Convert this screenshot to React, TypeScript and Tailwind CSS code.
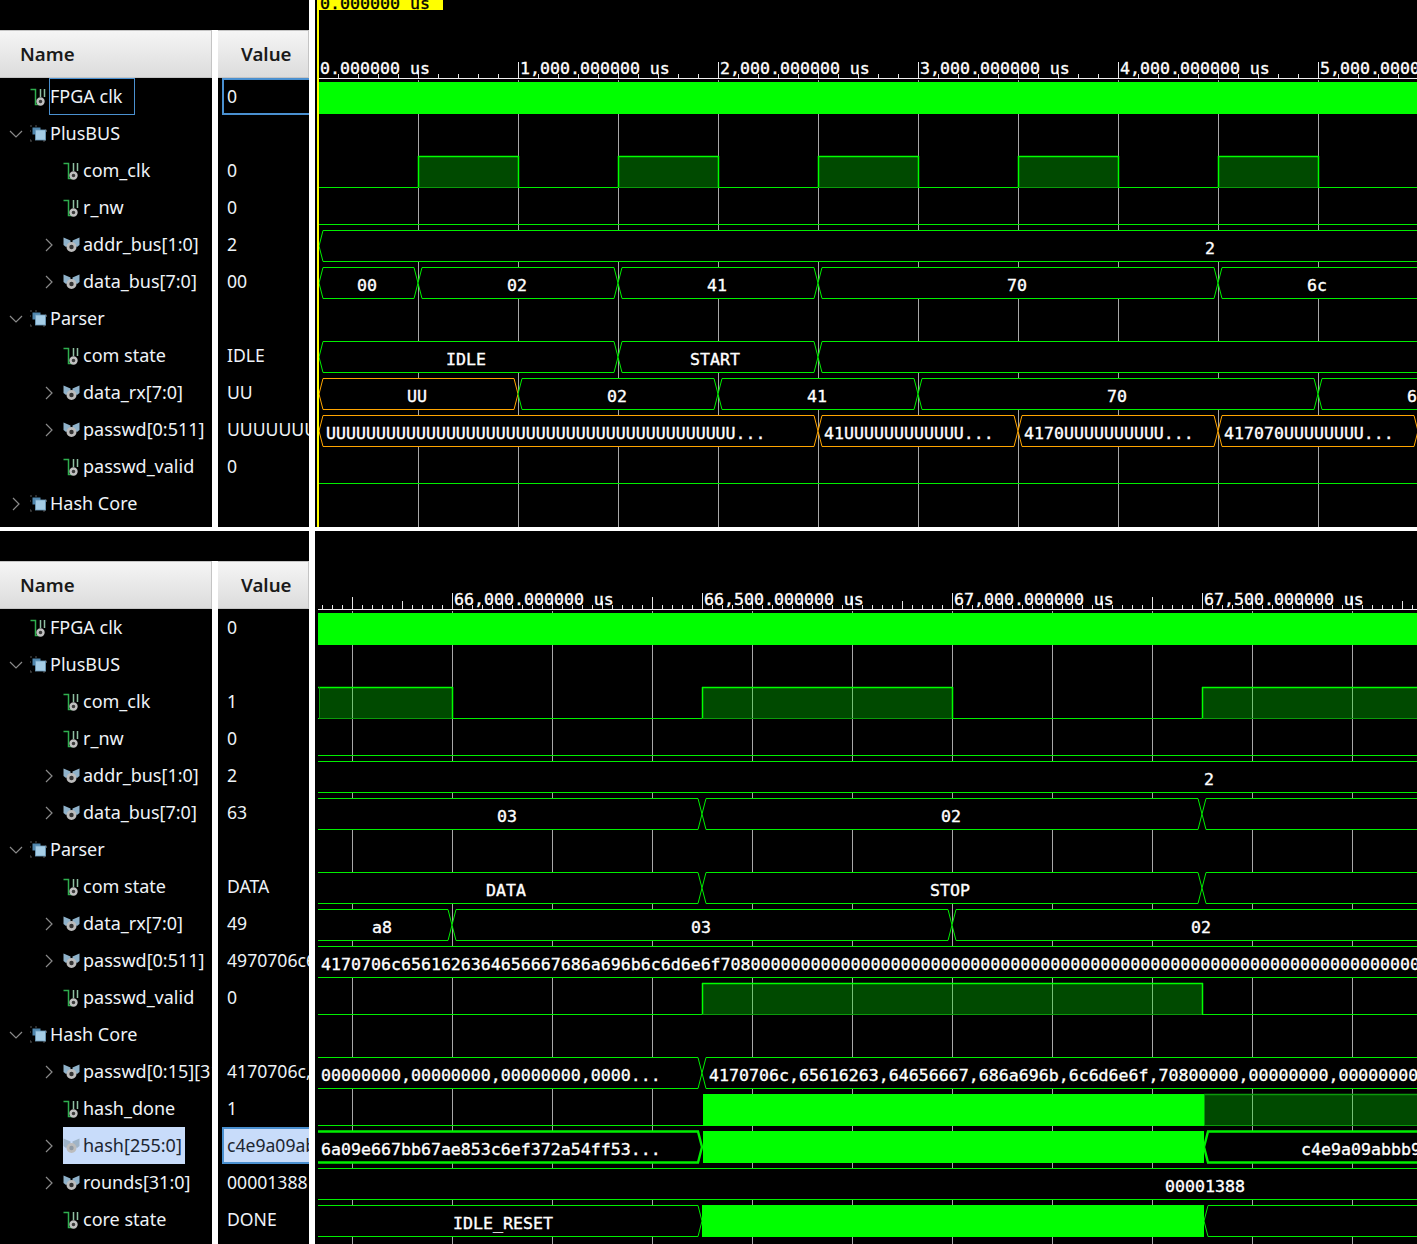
const ROW_H = 37;
const THIN = "#00ee00";
const BRIGHT = "#00ff00";
const ORANGE = "#ffa500";
const DIM = "#0b9a0b";
const WAVE_TEXT = "fill-white stroke-white [stroke-width:0.35px]";

type Tree = {
  name: string;
  value?: string;
  kind: "wire" | "bus" | "group";
  open?: boolean;
  root?: boolean;
  boxed?: boolean;
  selected?: boolean;
};

const topRows: Tree[] = [
  { name: "FPGA clk", value: "0", kind: "wire", root: true, boxed: true },
  { name: "PlusBUS", kind: "group", open: true, root: true },
  { name: "com_clk", value: "0", kind: "wire" },
  { name: "r_nw", value: "0", kind: "wire" },
  { name: "addr_bus[1:0]", value: "2", kind: "bus" },
  { name: "data_bus[7:0]", value: "00", kind: "bus" },
  { name: "Parser", kind: "group", open: true, root: true },
  { name: "com state", value: "IDLE", kind: "wire" },
  { name: "data_rx[7:0]", value: "UU", kind: "bus" },
  { name: "passwd[0:511]", value: "UUUUUUUUUUUU", kind: "bus" },
  { name: "passwd_valid", value: "0", kind: "wire" },
  { name: "Hash Core", kind: "group", root: true },
];

const bottomRows: Tree[] = [
  { name: "FPGA clk", value: "0", kind: "wire", root: true },
  { name: "PlusBUS", kind: "group", open: true, root: true },
  { name: "com_clk", value: "1", kind: "wire" },
  { name: "r_nw", value: "0", kind: "wire" },
  { name: "addr_bus[1:0]", value: "2", kind: "bus" },
  { name: "data_bus[7:0]", value: "63", kind: "bus" },
  { name: "Parser", kind: "group", open: true, root: true },
  { name: "com state", value: "DATA", kind: "wire" },
  { name: "data_rx[7:0]", value: "49", kind: "bus" },
  { name: "passwd[0:511]", value: "4970706c6561626", kind: "bus" },
  { name: "passwd_valid", value: "0", kind: "wire" },
  { name: "Hash Core", kind: "group", open: true, root: true },
  { name: "passwd[0:15][31:0]", value: "4170706c,65616263", kind: "bus" },
  { name: "hash_done", value: "1", kind: "wire" },
  { name: "hash[255:0]", value: "c4e9a09abbb9", kind: "bus", selected: true },
  { name: "rounds[31:0]", value: "00001388", kind: "bus" },
  { name: "core state", value: "DONE", kind: "wire" },
];

function WireIcon() {
  return (
    <svg width="17" height="18" viewBox="0 0 17 18" className="shrink-0">
      <path d="M0.5 1.5H5.5V16.5H9" fill="none" stroke="#2fae4e" strokeWidth="1.5" />
      <path d="M10.5 1V9M14.5 1V9" fill="none" stroke="#8fc0a2" strokeWidth="1.5" />
      <circle cx="10.5" cy="13.5" r="3" fill="#3a3a3a" stroke="#c0c0c0" strokeWidth="2.4" />
    </svg>
  );
}

function BusIcon({ selected }: { selected?: boolean }) {
  const wing = selected ? "#9fb4c8" : "#8fb2ca";
  return (
    <svg width="17" height="16" viewBox="0 0 17 16" className="shrink-0">
      <path d="M0.5 0.5L7.5 3.5V7L3 10L0.5 8Z" fill={wing} />
      <path d="M16.5 0.5L9.5 3.5V7L14 10L16.5 8Z" fill={wing} />
      <circle cx="8.5" cy="10" r="3.6" fill={selected ? "#8f9aa5" : "#333333"} stroke="#bcbcbc" strokeWidth="2.8" />
    </svg>
  );
}

function GroupIcon() {
  return (
    <svg width="17" height="17" viewBox="0 0 17 17" className="shrink-0">
      <path d="M0 1H2M5 1H7M15 5H16.5V7M0 5V7M0 14V16H2M15 14V16H13" fill="none" stroke="#555" strokeWidth="1" />
      <rect x="2.5" y="2.5" width="8" height="7" fill="#4f86ad" />
      <rect x="5.5" y="5" width="10" height="10" fill="#a5cde6" stroke="#6f9dbd" strokeWidth="0.8" />
    </svg>
  );
}

function Chevron({ open }: { open?: boolean }) {
  return (
    <svg width="14" height="14" viewBox="0 0 14 14" className="shrink-0">
      <path d={open ? "M1 4L7 10L13 4" : "M4 1L10 7L4 13"} fill="none" stroke="#8a8a8a" strokeWidth="1.2" />
    </svg>
  );
}

function NameCell({ row }: { row: Tree }) {
  const icon = row.kind === "wire" ? <WireIcon /> : row.kind === "bus" ? <BusIcon selected={row.selected} /> : <GroupIcon />;
  return (
    <div className={`flex h-[37px] items-center ${row.root ? "pl-[9px]" : "pl-[42px]"}`}>
      <div className="flex w-[21px] shrink-0 justify-start">
        {row.kind !== "wire" && <Chevron open={row.open} />}
      </div>
      <div
        className={
          row.selected
            ? "flex h-[37px] items-center bg-[#c8dcfa] pr-[3px] text-[#1c2530]"
            : "flex h-[37px] items-center text-[#eef3f8]"
        }
      >
        <div className="flex w-[20px] justify-start">{icon}</div>
        <span
          className={
            row.boxed
              ? "-ml-[1px] flex h-[37px] w-[86px] items-center border border-[#4a90d0] whitespace-nowrap"
              : "whitespace-nowrap"
          }
        >
          {row.name}
        </span>
      </div>
    </div>
  );
}

function ValueCell({ row }: { row: Tree }) {
  if (row.boxed || row.selected) {
    return (
      <div
        className={`ml-[4px] flex h-[37px] items-center overflow-hidden border-y-2 border-l-2 border-[#4a90d0] pl-[3px] whitespace-nowrap ${
          row.selected ? "bg-[#c8dcfa] text-[#1c2530]" : "text-[#eef3f8]"
        }`}
      >
        {row.value}
      </div>
    );
  }
  return (
    <div className="flex h-[37px] items-center overflow-hidden pl-[9px] whitespace-nowrap text-[#eef3f8]">
      {row.value}
    </div>
  );
}

function HeaderCell({ label, width, textClass }: { label: string; width: string; textClass: string }) {
  return (
    <div
      className={`${width} flex h-[48px] items-center border-y border-r border-[#c4c4c4] bg-gradient-to-b from-[#f5f5f5] to-[#dcdcdc] text-[18.7px] font-semibold text-[#1a1a1a] ${textClass}`}
    >
      {label}
    </div>
  );
}

function NamesPanel({ rows }: { rows: Tree[] }) {
  return (
    <div className="flex w-[309px] shrink-0 flex-col bg-black font-['Noto_Sans',sans-serif] text-[18px]">
      <div className="h-[30px] shrink-0" />
      <div className="flex shrink-0">
        <HeaderCell label="Name" width="w-[212px]" textClass="pl-[20px]" />
        <div className="w-[6px] bg-white" />
        <HeaderCell label="Value" width="w-[91px]" textClass="pl-[23px]" />
      </div>
      <div className="flex min-h-0 flex-1">
        <div className="w-[212px] shrink-0 overflow-hidden">
          {rows.map((r) => (
            <NameCell key={r.name} row={r} />
          ))}
        </div>
        <div className="w-[6px] bg-white" />
        <div className="w-[91px] shrink-0 overflow-hidden text-[17.6px]">
          {rows.map((r) => (
            <ValueCell key={r.name} row={r} />
          ))}
        </div>
      </div>
    </div>
  );
}

type Seg = { a: number; b: number; label?: string; cx?: number; sx?: number; color?: string };

function Bus({ top, segs, thick }: { top: number; segs: Seg[]; thick?: boolean }) {
  const y1 = top + 4.5;
  const y2 = top + 35.5;
  const mid = top + 20;
  return (
    <g>
      {segs.map((s) => (
        <g key={s.a}>
          <polygon
            points={`${s.a + 4},${y1} ${s.b - 4},${y1} ${s.b},${mid} ${s.b - 4},${y2} ${s.a + 4},${y2} ${s.a},${mid}`}
            fill="#000000"
            stroke={s.color || THIN}
            strokeWidth={thick ? 2.4 : 1}
          />
          {s.label && (
            <text x={s.sx ?? s.cx} y={top + 28} textAnchor={s.sx ? "start" : "middle"} className={WAVE_TEXT}>
              {s.label}
            </text>
          )}
        </g>
      ))}
    </g>
  );
}

function Wire({ top, highs, from, dim }: { top: number; highs: [number, number][]; from: number; dim?: boolean }) {
  const y1 = top + 4;
  const y2 = top + 35.5;
  return (
    <g>
      <line x1={from} x2={1417} y1={y2} y2={y2} stroke={THIN} />
      {highs.map(([a, b]) => (
        <g key={a}>
          <rect x={a} y={y1} width={b - a} height={y2 - y1} fill="#00ff00" fillOpacity={0.29} />
          <line x1={a <= 319 ? 318 : a} x2={b + 1} y1={y1 + 0.5} y2={y1 + 0.5} stroke={dim ? DIM : BRIGHT} strokeWidth={1.5} />
          <line x1={a + 0.5} x2={a + 0.5} y1={y1} y2={y2} stroke={dim || a <= 319 ? DIM : BRIGHT} strokeWidth={dim || a <= 319 ? 1 : 1.5} />
          <line x1={b + 0.5} x2={b + 0.5} y1={y1} y2={y2} stroke={BRIGHT} strokeWidth={1.5} />
          <line x1={a} x2={b} y1={y2} y2={y2} stroke={DIM} />
        </g>
      ))}
    </g>
  );
}

function TopWave() {
  const base = 78;
  const row = (i: number) => base + ROW_H * i;
  const ticks = Array.from({ length: 56 }, (_, i) => 318 + i * 20);
  return (
    <svg
      viewBox="315 0 1102 527"
      width="1102"
      height="527"
      className="block bg-black font-['DejaVu_Sans_Mono',monospace] text-[16.6px]"
    >
      <rect x={318} y={0} width={125} height={10} fill="#ffff00" />
      <text x={320} y={9} className="fill-black stroke-black [stroke-width:0.35px]">
        0.000000 us
      </text>
      {[0, 1, 2, 3, 4, 5].map((k) => (
        <text key={k} x={320 + k * 200} y={74} className={WAVE_TEXT}>
          {k === 0 ? "0.000000 us" : `${k},000.000000 us`}
        </text>
      ))}
      {ticks.map((x) => {
        const major = (x - 318) % 200 === 0;
        const mid = (x - 318) % 100 === 0;
        return <line key={x} x1={x + 0.5} x2={x + 0.5} y1={major ? 62 : mid ? 70 : 74} y2={78} stroke="#e8e8e8" />;
      })}
      <line x1={318} x2={1417} y1={78.5} y2={78.5} stroke="#f0f0f0" />

      {Array.from({ length: 10 }, (_, i) => 418 + i * 100).map((x) => (
        <line key={x} x1={x + 0.5} x2={x + 0.5} y1={80} y2={527} stroke="#a8a8a8" />
      ))}

      <rect x={319} y={82} width={1098} height={32} fill={BRIGHT} />
      <Wire top={row(2)} from={319} highs={[[418, 518], [618, 718], [818, 918], [1018, 1118], [1218, 1318]]} />
      <Wire top={row(3)} from={319} highs={[]} />
      <Bus top={row(4)} segs={[{ a: 319, b: 2100, label: "2", cx: 1210 }]} />
      <Bus
        top={row(5)}
        segs={[
          { a: 319, b: 418, label: "00", cx: 367 },
          { a: 418, b: 618, label: "02", cx: 517 },
          { a: 618, b: 818, label: "41", cx: 717 },
          { a: 818, b: 1218, label: "70", cx: 1017 },
          { a: 1218, b: 1430, label: "6c", cx: 1317 },
        ]}
      />
      <Bus
        top={row(7)}
        segs={[
          { a: 319, b: 618, label: "IDLE", cx: 466 },
          { a: 618, b: 818, label: "START", cx: 715 },
          { a: 818, b: 1500 },
        ]}
      />
      <Bus
        top={row(8)}
        segs={[
          { a: 319, b: 518, label: "UU", cx: 417, color: ORANGE },
          { a: 518, b: 718, label: "02", cx: 617 },
          { a: 718, b: 918, label: "41", cx: 817 },
          { a: 918, b: 1318, label: "70", cx: 1117 },
          { a: 1318, b: 1500, label: "6", cx: 1412 },
        ]}
      />
      <Bus
        top={row(9)}
        segs={[
          { a: 319, b: 818, label: `${"U".repeat(41)}...`, sx: 326, color: ORANGE },
          { a: 818, b: 1018, label: `41${"U".repeat(12)}...`, sx: 824, color: ORANGE },
          { a: 1018, b: 1218, label: `4170${"U".repeat(10)}...`, sx: 1024, color: ORANGE },
          { a: 1218, b: 1418, label: `417070${"U".repeat(8)}...`, sx: 1224, color: ORANGE },
        ]}
      />
      <Wire top={row(10)} from={319} highs={[]} />
      <rect x={317} y={0} width={2} height={527} fill="#ffff00" />
    </svg>
  );
}

function BottomWave() {
  const base = 609;
  const row = (i: number) => base + ROW_H * i;
  const ticks = Array.from({ length: 110 }, (_, i) => 322 + i * 10);
  return (
    <svg
      viewBox="315 531 1102 713"
      width="1102"
      height="713"
      className="block bg-black font-['DejaVu_Sans_Mono',monospace] text-[16.6px]"
    >
      {[
        [454, "66,000.000000 us"],
        [704, "66,500.000000 us"],
        [954, "67,000.000000 us"],
        [1204, "67,500.000000 us"],
      ].map(([x, t]) => (
        <text key={t} x={x} y={605} className={WAVE_TEXT}>
          {t}
        </text>
      ))}
      {ticks.map((x) => {
        const d = x - 352;
        const major = (x - 452) % 250 === 0;
        const tall = d % 100 === 0;
        const mid = d % 50 === 0;
        return (
          <line
            key={x}
            x1={x + 0.5}
            x2={x + 0.5}
            y1={major ? 593 : tall ? 597 : mid ? 601 : 605}
            y2={609}
            stroke="#e8e8e8"
          />
        );
      })}
      <line x1={318} x2={1417} y1={609.5} y2={609.5} stroke="#f0f0f0" />

      {Array.from({ length: 11 }, (_, i) => 352 + i * 100).map((x) => (
        <line key={x} x1={x + 0.5} x2={x + 0.5} y1={611} y2={1244} stroke="#a8a8a8" />
      ))}

      <rect x={318} y={613} width={1099} height={32} fill={BRIGHT} />
      <Wire top={row(2)} from={318} highs={[[319, 452], [702, 952], [1202, 1500]]} />
      <Wire top={row(3)} from={318} highs={[]} />
      <Bus top={row(4)} segs={[{ a: 200, b: 2000, label: "2", cx: 1209 }]} />
      <Bus
        top={row(5)}
        segs={[
          { a: 200, b: 702, label: "03", cx: 507 },
          { a: 702, b: 1202, label: "02", cx: 951 },
          { a: 1202, b: 1600 },
        ]}
      />
      <Bus
        top={row(7)}
        segs={[
          { a: 200, b: 702, label: "DATA", cx: 506 },
          { a: 702, b: 1202, label: "STOP", cx: 950 },
          { a: 1202, b: 1600 },
        ]}
      />
      <Bus
        top={row(8)}
        segs={[
          { a: 200, b: 452, label: "a8", cx: 382 },
          { a: 452, b: 952, label: "03", cx: 701 },
          { a: 952, b: 1600, label: "02", cx: 1201 },
        ]}
      />
      <Bus
        top={row(9)}
        segs={[
          { a: 200, b: 2000, label: `4170706c6561626364656667686a696b6c6d6e6f7080${"0".repeat(66)}`, sx: 321 },
        ]}
      />
      <Wire top={row(10)} from={318} highs={[[702, 1202]]} />
      <Bus
        top={row(12)}
        segs={[
          { a: 200, b: 702, label: "00000000,00000000,00000000,0000...", sx: 321 },
          {
            a: 702,
            b: 2000,
            label: "4170706c,65616263,64656667,686a696b,6c6d6e6f,70800000,00000000,00000000",
            sx: 709,
          },
        ]}
      />
      <Wire top={row(13)} from={318} dim highs={[[1204, 1500]]} />
      <rect x={703} y={row(13) + 4} width={501} height={32} fill={BRIGHT} />
      <Bus
        top={row(14)}
        thick
        segs={[
          { a: 200, b: 702, label: "6a09e667bb67ae853c6ef372a54ff53...", sx: 321 },
          { a: 1204, b: 2200, label: "c4e9a09abbb9f3c2", sx: 1301 },
        ]}
      />
      <rect x={703} y={row(14) + 4} width={501} height={32} fill={BRIGHT} />
      <Bus top={row(15)} segs={[{ a: 200, b: 2200, label: "00001388", cx: 1205 }]} />
      <Bus
        top={row(16)}
        segs={[
          { a: 200, b: 702, label: "IDLE_RESET", cx: 503 },
          { a: 1204, b: 2200 },
        ]}
      />
      <rect x={702} y={row(16) + 4} width={502} height={32} fill={BRIGHT} />
      <rect x={315} y={609} width={3} height={635} fill="#000000" />
    </svg>
  );
}

export default function App() {
  return (
    <div className="flex h-[1244px] w-[1417px] flex-col gap-[4px] overflow-hidden bg-white">
      <div className="flex h-[527px] shrink-0 gap-[6px]">
        <NamesPanel rows={topRows} />
        <TopWave />
      </div>
      <div className="flex h-[713px] shrink-0 gap-[6px]">
        <NamesPanel rows={bottomRows} />
        <BottomWave />
      </div>
    </div>
  );
}
